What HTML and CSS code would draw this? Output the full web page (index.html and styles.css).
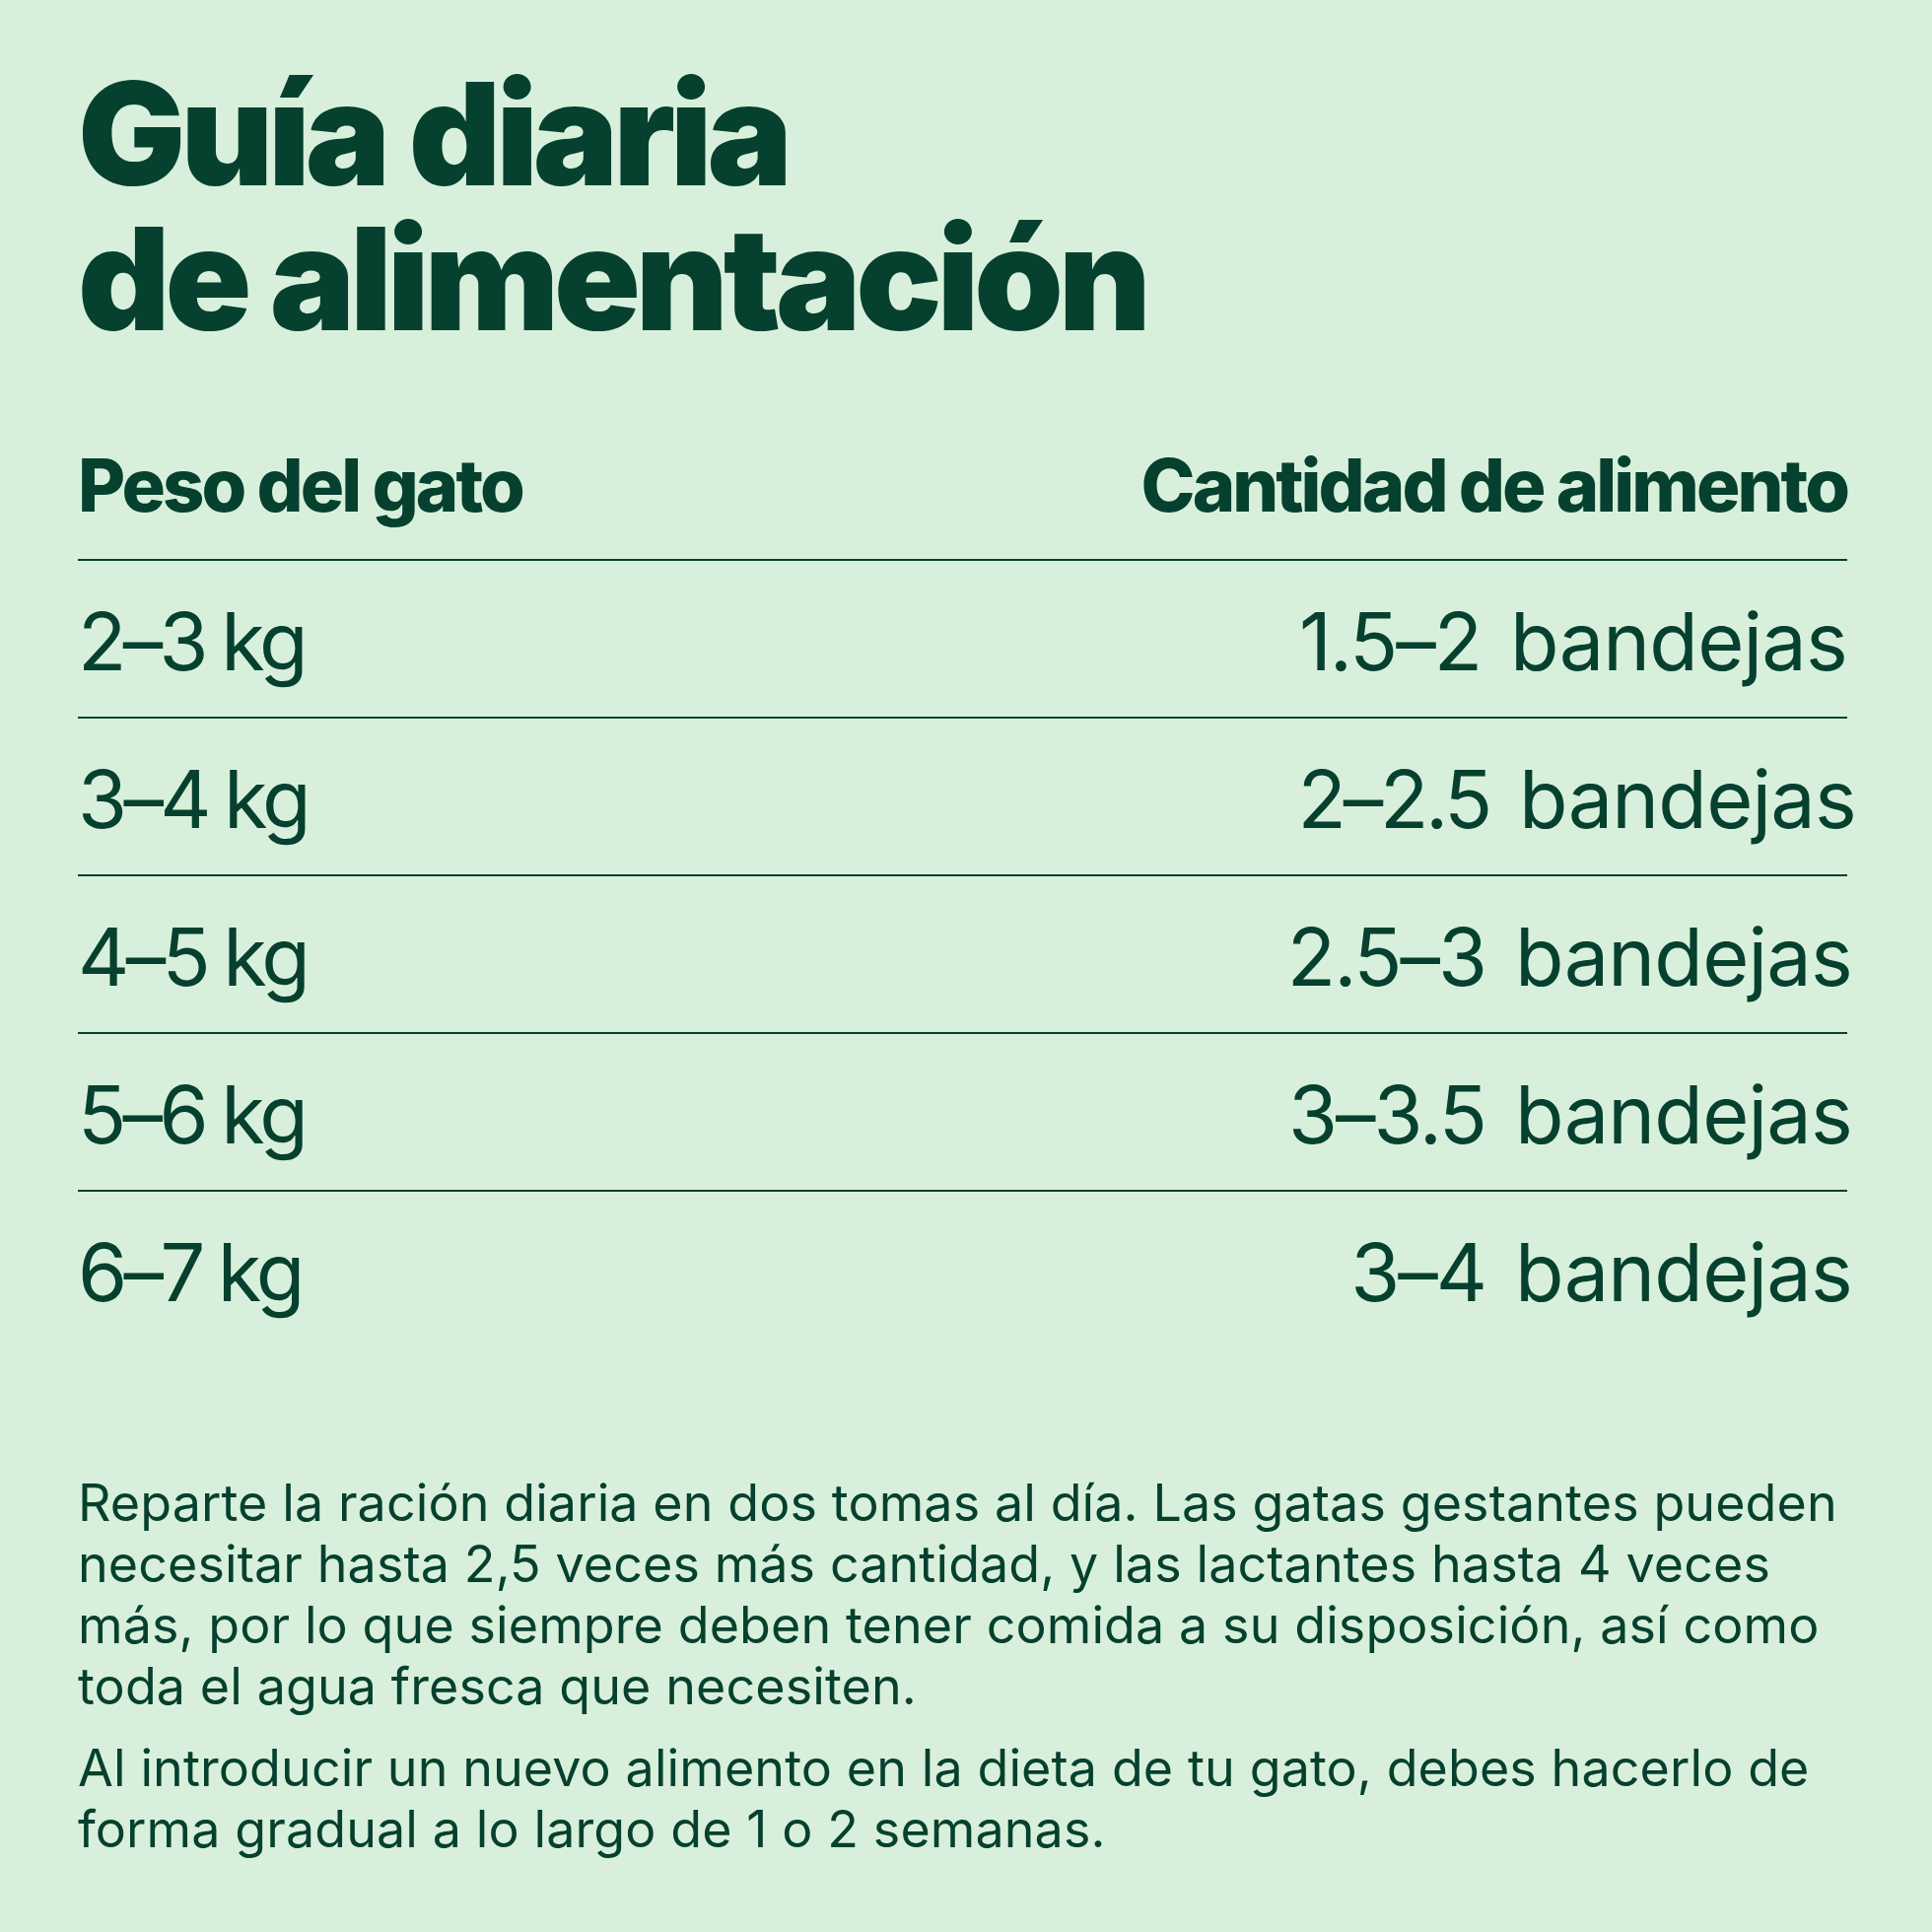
FILE: index.html
```html
<!DOCTYPE html>
<html lang="es">
<head>
<meta charset="utf-8">
<title>Guía diaria de alimentación</title>
<link rel="stylesheet" href="styles.css">
</head>
<body>
<main class="page">
  <h1 class="title">Guía diaria<br>de alimentación</h1>
  <section class="table">
    <div class="row head">
      <span class="cell">Peso del gato</span>
      <span class="cell">Cantidad de alimento</span>
    </div>
    <div class="row">
      <span class="cell weight">2–3 kg</span>
      <span class="cell amount"><span class="num">1.5–2</span><span class="unit">bandejas</span></span>
    </div>
    <div class="row">
      <span class="cell weight">3–4 kg</span>
      <span class="cell amount amount--wide"><span class="num">2–2.5</span><span class="unit">bandejas</span></span>
    </div>
    <div class="row">
      <span class="cell weight">4–5 kg</span>
      <span class="cell amount amount--mid"><span class="num">2.5–3</span><span class="unit">bandejas</span></span>
    </div>
    <div class="row">
      <span class="cell weight">5–6 kg</span>
      <span class="cell amount amount--mid"><span class="num">3–3.5</span><span class="unit">bandejas</span></span>
    </div>
    <div class="row last">
      <span class="cell weight">6–7 kg</span>
      <span class="cell amount amount--mid"><span class="num">3–4</span><span class="unit">bandejas</span></span>
    </div>
  </section>
  <section class="notes">
    <p>Reparte la ración diaria en dos tomas al día. Las gatas gestantes pueden necesitar hasta 2,5 veces más cantidad, y las lactantes hasta 4 veces más, por lo que siempre deben tener comida a su disposición, así como toda el agua fresca que necesiten.</p>
    <p>Al introducir un nuevo alimento en la dieta de tu gato, debes hacerlo de forma gradual a lo largo de 1 o 2 semanas.</p>
  </section>
</main>
</body>
</html>
```

FILE: styles.css
```css
html, body {
  margin: 0;
  padding: 0;
  background: #d8f0db;
}
body {
  width: 1960px;
  height: 1960px;
  overflow: hidden;
  color: #06402f;
  font-family: Inter, "Noto Sans", sans-serif;
}
.page {
  padding: 62px 86px 0 79px;
}
.title {
  margin: 0;
  font-size: 145px;
  line-height: 147px;
  font-weight: 900;
  letter-spacing: -0.036em;
}
.table {
  margin-top: 88px;
}
.row {
  display: flex;
  justify-content: space-between;
  align-items: baseline;
  border-bottom: 2px solid #06402f;
  font-size: 81px;
  line-height: 96px;
  height: 158px;
  box-sizing: content-box;
  letter-spacing: -0.025em;
}
.row .cell {
  padding-top: 34px;
}
.row .weight {
  letter-spacing: -0.045em;
  word-spacing: -3px;
}
.row .amount--wide {
  margin-right: -9px;
}
.row .amount--mid {
  margin-right: -5px;
}
.row.head {
  font-size: 74px;
  font-weight: 800;
  height: 123px;
  letter-spacing: -0.04em;
}
.row.head .cell {
  padding-top: 0;
}
.row.last {
  border-bottom: none;
}
.unit {
  margin-left: 30px;
  letter-spacing: -0.01em;
}
.amount--wide .num {
  letter-spacing: -0.04em;
}
.notes {
  margin-top: 127px;
  font-size: 52px;
  line-height: 62px;
  letter-spacing: 0.1px;
}
.notes p {
  margin: 0 0 21px 0;
}
```
